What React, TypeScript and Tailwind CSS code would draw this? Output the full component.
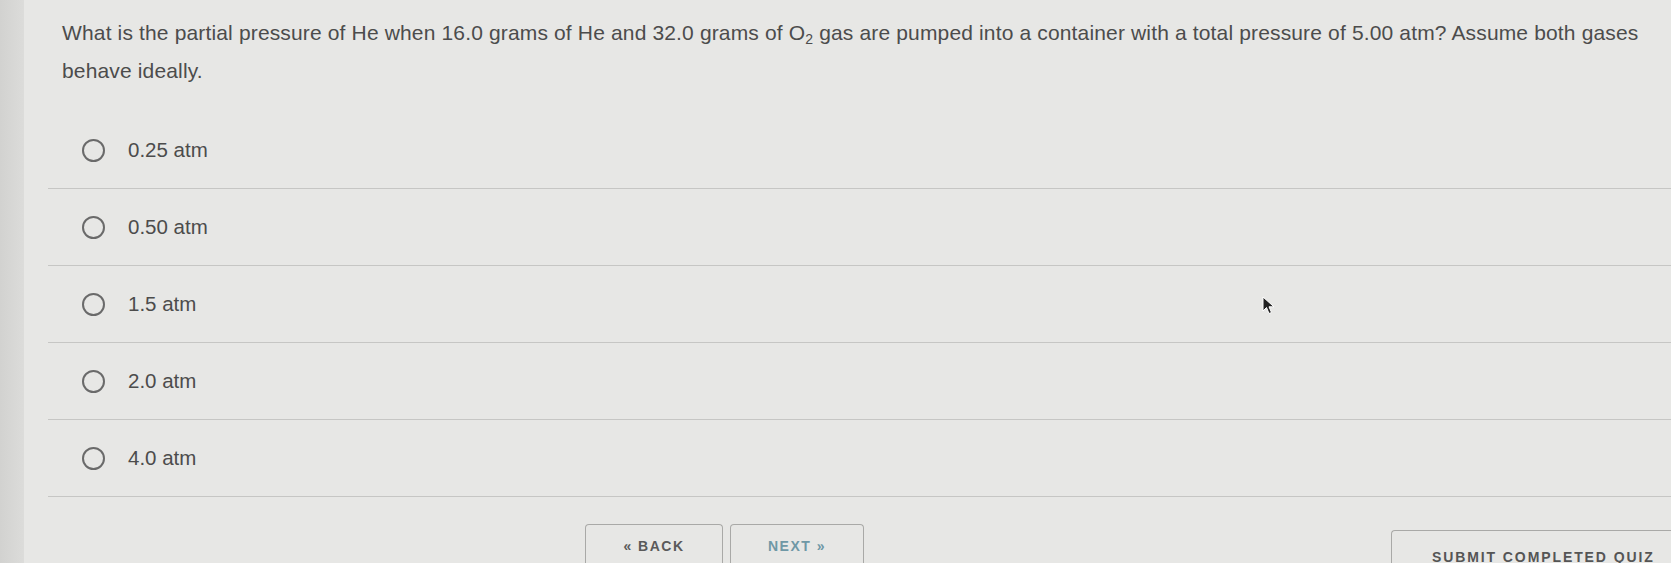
import React from 'react'

const options = ['0.25 atm', '0.50 atm', '1.5 atm', '2.0 atm', '4.0 atm']

function Radio() {
  return <span className="block h-[23px] w-[23px] shrink-0 rounded-full border-[2.5px] border-[#6a6a6a]" />
}

export default function App() {
  return (
    <div
      className="relative flex h-[563px] w-[1671px] overflow-hidden bg-[#e7e7e5] text-[#4c4c4c]"
      style={{ fontFamily: '"Liberation Sans", Arial, sans-serif' }}
    >
      <div className="w-[24px] shrink-0 bg-gradient-to-r from-[#d2d2d0] to-[#dcdcda]" />
      <div className="flex flex-1 flex-col pl-[24px]">
        <p className="pl-[14px] pr-[20px] pt-[14px] text-[21px] leading-[38px] tracking-[0.15px]">
          What is the partial pressure of He when 16.0 grams of He and 32.0 grams of O
          <sub className="text-[14px] leading-none">2</sub> gas are pumped into a container with a total pressure of 5.00
          atm? Assume both gases behave ideally.
        </p>
        <ul className="mt-[22px] flex flex-col">
          {options.map((o) => (
            <li key={o} className="flex h-[77px] items-center gap-[23px] border-b-[1.5px] border-[#c6c6c4] pl-[34px]">
              <Radio />
              <span className="text-[20.5px]">{o}</span>
            </li>
          ))}
        </ul>
        <div className="mt-[27px] flex">
          <div className="ml-[537px] flex gap-[7px]">
            <button className="h-[48px] w-[138px] rounded-t-[4px] border-[1.5px] border-b-0 border-[#a9a9a7] pb-[4px] text-[14px] font-bold tracking-[1.5px] text-[#5a5a5a]">
              « BACK
            </button>
            <button className="h-[48px] w-[134px] rounded-t-[4px] border-[1.5px] border-b-0 border-[#a9a9a7] pb-[4px] text-[14px] font-bold tracking-[1.5px] text-[#6f98a6]">
              NEXT »
            </button>
          </div>
          <button className="ml-auto mt-[6px] h-[44px] w-[280px] rounded-tl-[4px] border-l-[1.5px] border-t-[1.5px] border-[#a9a9a7] pl-[40px] pt-[10px] text-left text-[14px] font-bold tracking-[1.9px] text-[#555]">
            SUBMIT COMPLETED QUIZ
          </button>
        </div>
      </div>
      <svg className="absolute left-[1262px] top-[296px]" width="14" height="20" viewBox="0 0 14 20">
        <path d="M1 1 L1 15 L4.5 11.5 L7 17.5 L9.5 16.5 L7 10.8 L12 10.8 Z" fill="#222" stroke="#fff" strokeWidth="1" />
      </svg>
    </div>
  )
}
